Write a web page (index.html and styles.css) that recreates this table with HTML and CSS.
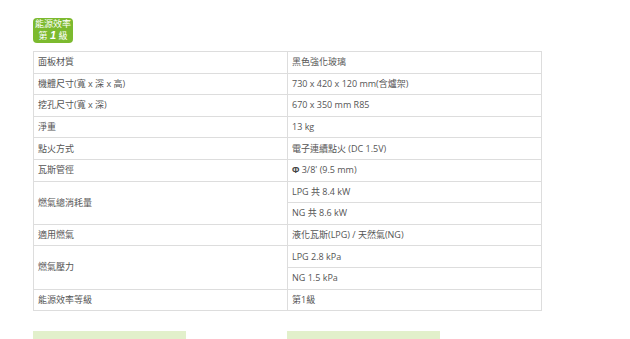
FILE: index.html
```html
<!DOCTYPE html>
<html>
<head>
<meta charset="utf-8">
<link rel="stylesheet" href="styles.css">
</head>
<body>
<div class="page">
  <div class="badge">
    <div class="badge-line">能源效率</div>
    <div class="badge-line">第 <span class="num">1</span> 級</div>
  </div>
  <table class="spec">
    <tr><td class="k">面板材質</td><td>黑色強化玻璃</td></tr>
    <tr><td class="k">機體尺寸(寬 x 深 x 高)</td><td>730 x 420 x 120 mm(含爐架)</td></tr>
    <tr><td class="k">挖孔尺寸(寬 x 深)</td><td>670 x 350 mm R85</td></tr>
    <tr><td class="k">淨重</td><td>13 kg</td></tr>
    <tr><td class="k">點火方式</td><td>電子連續點火 (DC 1.5V)</td></tr>
    <tr><td class="k">瓦斯管徑</td><td><b class="phi">Φ</b> 3/8' (9.5 mm)</td></tr>
    <tr><td class="k" rowspan="2">燃氣總消耗量</td><td>LPG 共 8.4 kW</td></tr>
    <tr><td>NG 共 8.6 kW</td></tr>
    <tr><td class="k">適用燃氣</td><td>液化瓦斯(LPG) / 天然氣(NG)</td></tr>
    <tr><td class="k" rowspan="2">燃氣壓力</td><td>LPG 2.8 kPa</td></tr>
    <tr><td>NG 1.5 kPa</td></tr>
    <tr><td class="k">能源效率等級</td><td>第1級</td></tr>
  </table>
  <div class="bars">
    <div class="bar"></div>
    <div class="bar"></div>
  </div>
</div>
</body>
</html>
```
FILE: styles.css
```css
html, body {
  margin: 0;
  padding: 0;
  background: #fff;
}
body {
  font-family: "Open Sans", "Noto Sans CJK TC", sans-serif;
  color: #555;
  overflow: hidden;
}
.page {
  padding: 18px 0 0 33px;
  width: 509px;
}
.badge {
  width: 40px;
  height: 25px;
  box-sizing: border-box;
  background: #7cba2f;
  border-radius: 4px;
  color: #fff;
  font-size: 9px;
  line-height: 12px;
  text-align: center;
  padding-top: 0;
  margin-bottom: 8px;
  overflow: hidden;
}
.badge-line {
  white-space: nowrap;
  height: 12px;
}
.badge .num {
  font-style: italic;
  font-weight: bold;
  font-size: 11px;
  line-height: 10px;
  font-family: "Liberation Sans", sans-serif;
}
.spec {
  width: 509px;
  border-collapse: collapse;
  font-size: 9px;
  table-layout: fixed;
}
.spec td {
  border: 1px solid #dddddd;
  height: 21.6px;
  padding: 0 0 0 4px;
  line-height: 12px;
  white-space: nowrap;
  box-sizing: border-box;
}
.spec td.k {
  width: 254px;
}
.spec .phi {
  font-family: "Liberation Sans", sans-serif;
  font-weight: bold;
  color: #444;
}
.bars {
  display: flex;
  gap: 101px;
  margin-top: 20px;
}
.bar {
  width: 153px;
  height: 20px;
  background: #e2f0cb;
}
```
